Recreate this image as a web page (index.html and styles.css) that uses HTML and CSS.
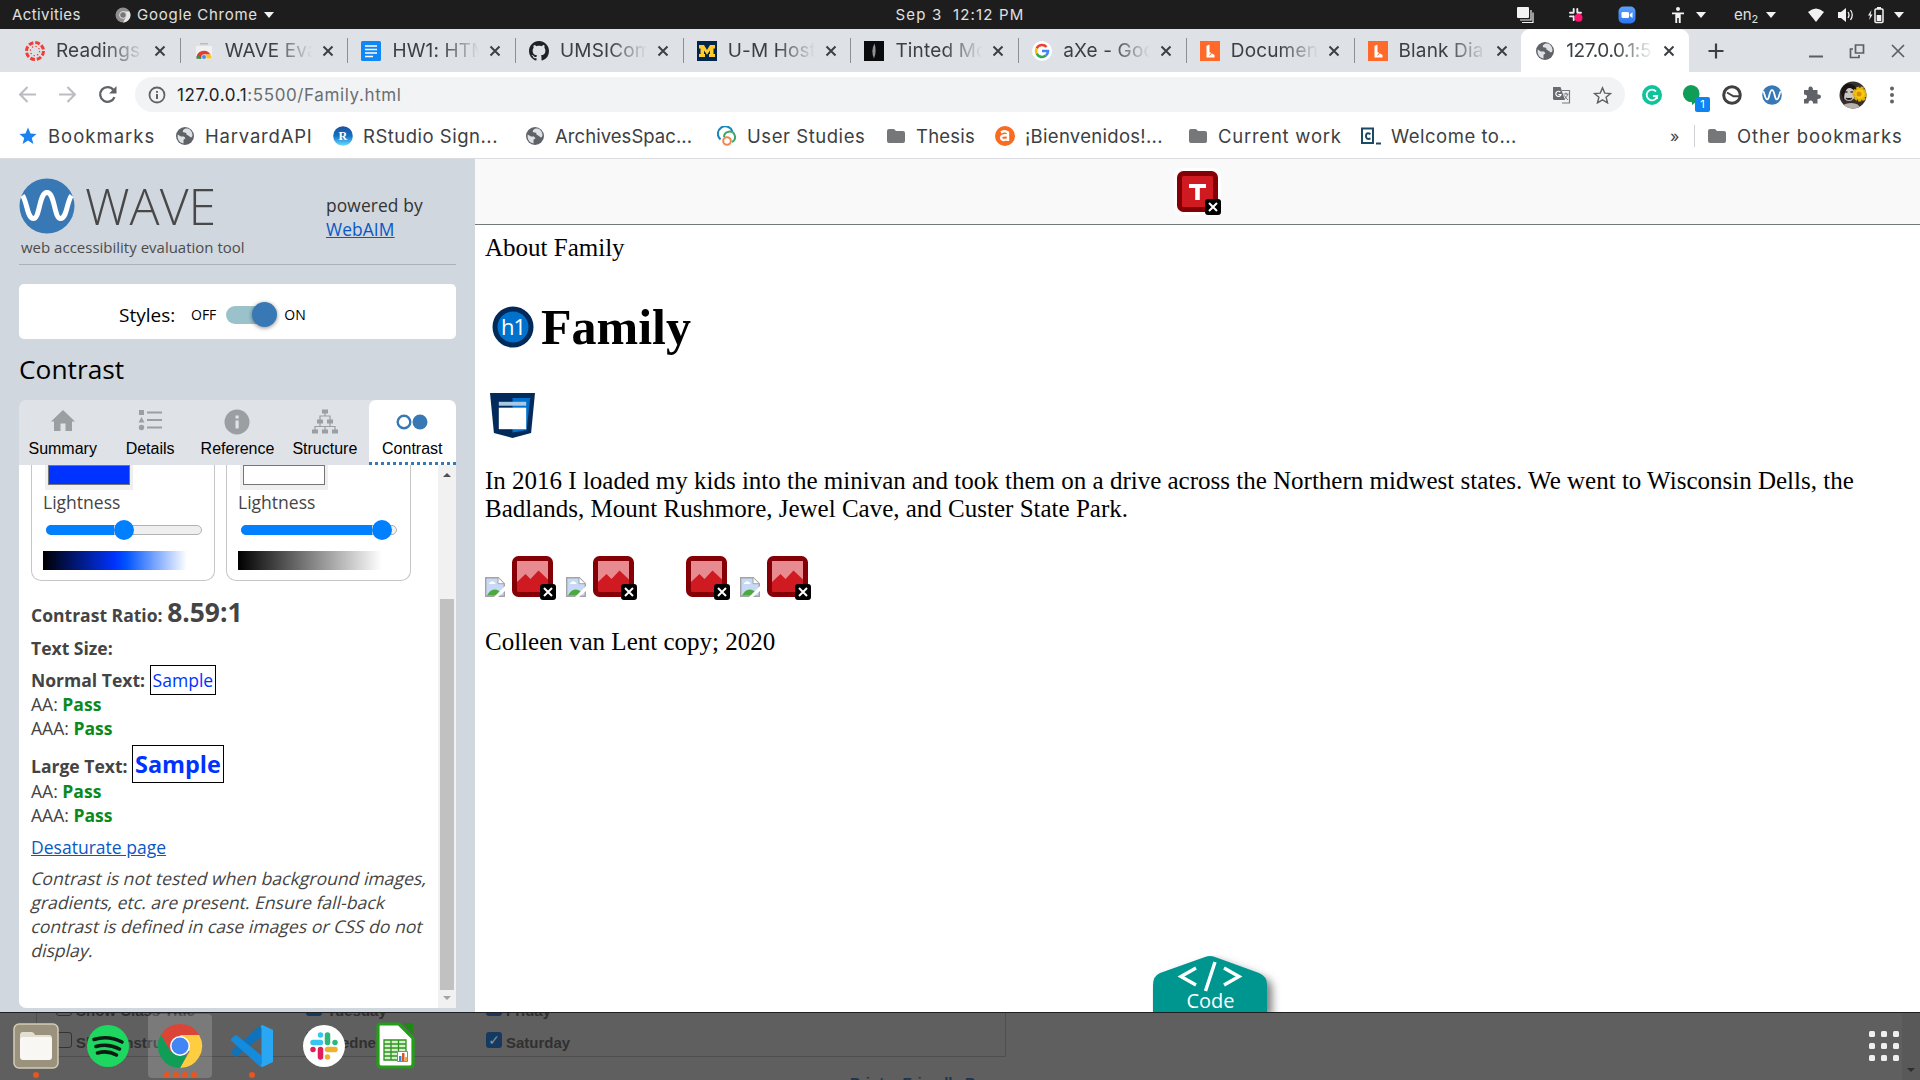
FILE: index.html
```html
<!DOCTYPE html>
<html lang="en">
<head>
<meta charset="utf-8">
<title>127.0.0.1:5500/Family.html</title>
<link rel="stylesheet" href="styles.css">
</head>
<body>
<svg class="defs" width="0" height="0">
  <defs>
    <clipPath id="round"><circle cx="14" cy="14" r="13.5"/></clipPath>
    <linearGradient id="rs" x1="0" y1="0" x2="0" y2="1"><stop offset="0" stop-color="#1d4fa0"/><stop offset=".5" stop-color="#1272c4"/><stop offset="1" stop-color="#6fe0ff"/></linearGradient>
    <linearGradient id="zm" x1="0" y1="0" x2="0" y2="1"><stop offset="0" stop-color="#5aa2ff"/><stop offset="1" stop-color="#2d74f0"/></linearGradient>
    <symbol id="globe" viewBox="0 0 20 20"><circle cx="10" cy="10" r="9" fill="#5f6368"/><path d="M2.700 8.500 6 10.500h3l1.500 1.800-2 1.500v3.700C4.500 16.800 2 13.500 2.700 8.500zM10.500 2.500c-2 1-3.500 2.500-2.500 3.500s3.500 0 3.500 2 2.500 1.300 3.500 3c1.300 1 2.500-.5 2.500-1.500 0-3.500-2-6-4.500-7z" fill="#dee1e6"/></symbol>
    <symbol id="folder" viewBox="0 0 20 20"><path d="M1 5q0-2 2-2h5l2 2h7q2 0 2 2v8q0 2-2 2H3q-2 0-2-2z" fill="#757779"/></symbol>
    <symbol id="close" viewBox="0 0 12 12"><path d="M1.500 1.500l9 9m0-9l-9 9" stroke="#3c4043" stroke-width="2" fill="none"/></symbol>
    <symbol id="lucid" viewBox="0 0 20 20"><path d="M0 0h20v20H0z" fill="#ff6a2b"/><path d="M6.500 5 9.500 3.500v7.500L14.500 14v2.500h-8z" fill="#fff"/><path d="M9.500 14.500l2-2.500" stroke="#ff6a2b" stroke-width="1"/></symbol>
    <symbol id="tri" viewBox="0 0 10 6"><path d="M0 0h10L5 6z" fill="#f2f2f2"/></symbol>
    <symbol id="wave" viewBox="0 0 56 56"><circle cx="28" cy="28" r="27.500" fill="#3879b5"/><path d="M3.500 17.500C8 23 8 40.500 14.500 40.500S20 14.500 28 14.500s7 26 13.500 26S48 23 52.500 17.500" fill="none" stroke="#fff" stroke-width="5"/></symbol>
    <symbol id="missing" viewBox="0 0 45 45"><rect x="2.500" y="2.500" width="36" height="36" rx="4" fill="#cf1a22" stroke="#840006" stroke-width="5"/><path d="M5 5h31v18.500L26.500 14.500 18.500 23l-5-5L5 26z" fill="#e78b90"/><rect x="28" y="28" width="16" height="16" rx="3" fill="#000"/><path d="M32 32l8 8m0-8l-8 8" stroke="#fff" stroke-width="2"/></symbol>
    <symbol id="broken" viewBox="0 0 20 20"><path d="M.7.700h12.600l6 6v12.600H.7z" fill="#c7d9f4" stroke="#a3a3a3" stroke-width="1.400"/><path d="M13 .7v6h6" fill="#fff" stroke="#a3a3a3"/><path d="M4 7q0-2 2-2 1-2 2.500 0Q10.500 5 10.500 7z" fill="#fff"/><path d="M2 18.500q3-6 7.500-6 4 0 5.500 2.500v3.500z" fill="#4ba93f"/><path d="M20 9 9 20h4l7-6z" fill="#fff"/></symbol>
  </defs>
</svg>

<div class="desktop">
<header class="topbar">
  <span class="tb activities">Activities</span>
  <svg class="tb-chrome" width="16" height="16" viewBox="0 0 16 16"><circle cx="8" cy="8" r="7.500" fill="#8f8f8f"/><path d="M8 4.500h6.600A7.500 7.500 0 0 1 8 15.500l3-5.500z" fill="#e6e6e6"/><circle cx="8" cy="8" r="3.400" fill="#777" stroke="#e2e2e2"/></svg>
  <span class="tb appname">Google Chrome</span>
  <svg class="tri" width="10" height="6"><use href="#tri"/></svg>
  <span class="tb clock">Sep 3&nbsp; 12:12 PM</span>
  <div class="tray">
    <svg width="18" height="18" viewBox="0 0 18 18"><rect x="1" y="1" width="12" height="11" rx="1" fill="#f2f2f2"/><path d="M15 4v10H4M17 6.500v10H6" fill="none" stroke="#f2f2f2" stroke-width="1.200"/></svg>
    <svg class="t-slack" width="16" height="16" viewBox="0 0 16 16"><g stroke="#eee" stroke-width="1.900" stroke-linecap="round"><path d="M5.700 2v3M9.300 2v3.500M5.700 9.500V13M2 5.800h3.500M2 9.400h3.500M9.500 5.800H13"/></g><circle cx="10.500" cy="10.800" r="4" fill="#ff1471"/></svg>
    <svg class="t-zoom" width="18" height="18" viewBox="0 0 18 18"><rect x=".5" y=".5" width="17" height="17" rx="5" fill="url(#zm)"/><rect x="3.500" y="6" width="7.500" height="6" rx="1.300" fill="#fff"/><path d="M11.800 8.200 14.500 6.300v5.600l-2.700-1.900z" fill="#fff"/></svg>
    <svg class="t-acc" width="14" height="18" viewBox="0 0 14 18"><circle cx="7" cy="3" r="2" fill="#f2f2f2"/><path d="M1 6.500h12v1.800H9.700V17H7.800v-5H6.200v5H4.300V8.300H1z" fill="#f2f2f2"/></svg>
    <svg class="tri t-t1" width="10" height="6"><use href="#tri"/></svg>
    <span class="tb t-en">en<sub>2</sub></span>
    <svg class="tri t-t2" width="10" height="6"><use href="#tri"/></svg>
    <svg class="t-wifi" width="16" height="14" viewBox="0 0 16 14"><path d="M0 4Q8-3 16 4L8 14z" fill="#f2f2f2"/></svg>
    <svg class="t-vol" width="16" height="16" viewBox="0 0 16 16"><path d="M0 5h3l5-4v14l-5-4H0z" fill="#f2f2f2"/><path d="M10 5q2 3 0 6M12.500 3q3.500 5 0 10" fill="none" stroke="#f2f2f2" stroke-width="1.300"/></svg>
    <svg class="t-bat" width="16" height="18" viewBox="0 0 16 18"><path d="M3.500 4 0 9.500h2L1.200 14 4.500 8.500h-2z" fill="#f2f2f2"/><rect x="7" y="3" width="8" height="13.500" rx="1" fill="none" stroke="#f2f2f2" stroke-width="1.500"/><path d="M9 1h4v2H9zM8.700 9h4.600v6H8.700z" fill="#f2f2f2"/></svg>
    <svg class="tri t-t3" width="10" height="6"><use href="#tri"/></svg>
  </div>
</header>

<nav class="tabs">
  <div class="tab"><svg class="fav" viewBox="0 0 20 20"><circle cx="10" cy="10" r="8.500" fill="none" stroke="#ef3e36" stroke-width="3" stroke-dasharray="4.800 1.870"/><circle cx="10" cy="10" r="4.600" fill="none" stroke="#ef3e36" stroke-width="1.300" stroke-dasharray="1.300 2.300"/></svg><span class="tt">Readings</span><svg class="x"><use href="#close"/></svg></div>
  <div class="tab"><svg class="fav" viewBox="0 0 20 20"><path d="M6 2h8v1.500H6z" fill="#bbb"/><path d="M2 5h16v13H2z" fill="#f1f1f1"/><path d="M2.500 17.500a7.500 7.500 0 0 1 14-4H10l-3 4z" fill="#e33b2e"/><path d="M10 13.500h6.500q1 2 1 4H11z" fill="#fbc116"/><path d="M2.500 17.500q0-2 1-4L8 18z" fill="#1ba04b"/><circle cx="10" cy="16" r="2.400" fill="#4688f1" stroke="#fff" stroke-width=".6"/></svg><span class="tt">WAVE Eva</span><svg class="x"><use href="#close"/></svg></div>
  <div class="tab"><svg class="fav" viewBox="0 0 20 20"><rect width="20" height="20" rx="1.500" fill="#1187f5"/><path d="M4 5h12M4 8.500h12M4 12h12M4 15.500h8" stroke="#fff" stroke-width="1.700"/></svg><span class="tt">HW1: HTM</span><svg class="x"><use href="#close"/></svg></div>
  <div class="tab"><svg class="fav" viewBox="0 0 16 16"><path fill="#1f2328" d="M8 0C3.580 0 0 3.580 0 8c0 3.540 2.290 6.530 5.470 7.590.4.070.55-.17.55-.38 0-.19-.01-.82-.01-1.490-2.010.37-2.530-.49-2.690-.94-.09-.23-.48-.94-.82-1.130-.28-.15-.68-.52-.01-.53.63-.01 1.080.58 1.230.82.72 1.210 1.870.87 2.330.66.070-.52.28-.87.51-1.070-1.780-.2-3.640-.89-3.640-3.950 0-.87.31-1.590.82-2.150-.08-.2-.36-1.020.08-2.120 0 0 .67-.21 2.200.82.64-.18 1.320-.27 2-.27s1.360.09 2 .27c1.530-1.040 2.200-.82 2.200-.82.44 1.100.16 1.920.08 2.120.51.56.82 1.270.82 2.150 0 3.070-1.870 3.750-3.650 3.950.29.25.54.73.54 1.480 0 1.070-.01 1.930-.01 2.200 0 .21.15.46.55.38A8.010 8.010 0 0 0 16 8c0-4.420-3.580-8-8-8z"/></svg><span class="tt">UMSICom</span><svg class="x"><use href="#close"/></svg></div>
  <div class="tab"><svg class="fav" viewBox="0 0 20 20"><path d="M0 0h20v20H0z" fill="#02264b"/><path d="M2 4h5l3 5 3-5h5v3.500h-1.500v5.500H18v3h-6v-3h1v-3.500l-3 4.200L7 9.500V13h1v3H2v-3h1.500V7.500H2z" fill="#ffcb2f"/></svg><span class="tt">U-M Host</span><svg class="x"><use href="#close"/></svg></div>
  <div class="tab"><svg class="fav" viewBox="0 0 20 20"><path d="M0 0h20v20H0z" fill="#090b0d"/><path d="M10.500 2.500Q6.500 9.500 10 17.500q3-8 .5-15z" fill="#8e9496"/></svg><span class="tt">Tinted Mo</span><svg class="x"><use href="#close"/></svg></div>
  <div class="tab"><svg class="fav" viewBox="0 0 20 20"><circle cx="10" cy="10" r="10" fill="#fff"/><g fill="none" stroke-width="2.600"><path d="M14.500 6A6 6 0 0 0 4.700 7.300" stroke="#ea4335"/><path d="M4.700 7.300a6 6 0 0 0 0 5.400" stroke="#fbbc05"/><path d="M4.700 12.700a6 6 0 0 0 9.200 1.900" stroke="#34a853"/><path d="M13.900 14.600A6 6 0 0 0 16 10h-6" stroke="#4285f4"/></g></svg><span class="tt">aXe - Goog</span><svg class="x"><use href="#close"/></svg></div>
  <div class="tab"><svg class="fav"><use href="#lucid"/></svg><span class="tt">Documen</span><svg class="x"><use href="#close"/></svg></div>
  <div class="tab nosep"><svg class="fav"><use href="#lucid"/></svg><span class="tt">Blank Dia</span><svg class="x"><use href="#close"/></svg></div>
  <div class="tab active"><svg class="fav"><use href="#globe"/></svg><span class="tt">127.0.0.1:5</span><svg class="x"><use href="#close"/></svg></div>
  <svg class="plus" viewBox="0 0 16 16"><path d="M8 .5v15M.5 8h15" stroke="#3c4043" stroke-width="2.200"/></svg>
  <div class="winctl">
    <svg viewBox="0 0 16 16"><path d="M1 13.500h14" stroke="#5c5f63" stroke-width="2"/></svg>
    <svg viewBox="0 0 16 16"><path d="M6.500 2h8v8h-8zM4 6H1.500v8.500H10V12" fill="none" stroke="#5c5f63" stroke-width="1.700"/></svg>
    <svg viewBox="0 0 16 16"><path d="M2 2l12 12M14 2 2 14" stroke="#5c5f63" stroke-width="1.700"/></svg>
  </div>
</nav>

<div class="toolbar">
  <svg class="nav" viewBox="0 0 18 18"><path d="M17 9H2M9 2 2 9l7 7" fill="none" stroke="#bbbdc0" stroke-width="2"/></svg>
  <svg class="nav" viewBox="0 0 18 18"><path d="M1 9h15M9 2l7 7-7 7" fill="none" stroke="#bbbdc0" stroke-width="2"/></svg>
  <svg class="nav" viewBox="0 0 18 18"><path d="M15.600 11.500A7 7 0 1 1 14.500 4.500" fill="none" stroke="#5f6368" stroke-width="2.200"/><path d="M17.500 1v7h-7z" fill="#5f6368"/></svg>
  <div class="omnibox">
    <svg width="18" height="18" viewBox="0 0 18 18"><circle cx="9" cy="9" r="7.500" fill="none" stroke="#5f6368" stroke-width="1.800"/><path d="M9 8v5M9 5v1.800" stroke="#5f6368" stroke-width="2"/></svg>
    <span class="url"><b>127.0.0.1</b>:5500/Family.html</span>
    <svg class="translate" width="18" height="18" viewBox="0 0 18 18"><path d="M9 4.500h7.500v12.500H9" fill="#f1f3f4" stroke="#777b80" stroke-width="1.200"/><path d="M0 1h7.500L12 14H1.500Q0 14 0 12.500z" fill="#686c71"/><path d="M7.300 6A2.600 2.600 0 1 0 8 8.500H5.500" fill="none" stroke="#fff" stroke-width="1.200"/><path d="M10.500 8h5M13 6.500V8m1.800 0q-.8 3-3.300 5M11.500 9.500q1 2.500 3.500 4.500" fill="none" stroke="#777b80"/></svg>
    <svg width="19" height="18" viewBox="0 0 20 19"><path d="M10 2l2.400 5.500 6 .5-4.600 3.900 1.500 5.900-5.300-3.200-5.300 3.200 1.500-5.900L1.600 8l6-.5z" fill="none" stroke="#5f6368" stroke-width="1.500"/></svg>
  </div>
  <div class="exts">
    <svg viewBox="0 0 20 20"><circle cx="10" cy="10" r="10" fill="#11c39a"/><path d="M14 6.500A5.300 5.300 0 1 0 15.200 11H11m4 0v3" fill="none" stroke="#fff" stroke-width="1.800"/></svg>
    <span class="hang"><svg viewBox="0 0 20 20"><path d="M9 0a8.500 8.500 0 0 1 8.500 8.700c0 5-3.500 8.300-7.500 11.300v-2.800A8.600 8.600 0 1 1 9 0z" fill="#0f9d58"/></svg><i class="badge">1</i></span>
    <svg viewBox="0 0 20 20"><circle cx="10" cy="10" r="8.300" fill="#fff" stroke="#404040" stroke-width="3"/><path d="M5 7.500l6.500 3.800H17" stroke="#404040" stroke-width="2" fill="none"/></svg>
    <svg><use href="#wave"/></svg>
    <svg viewBox="0 0 20 20"><path d="M2 5h4.500Q6 1.500 8.500 1.500T11 5h4.500v4.500Q19 9 19 11.500T15.500 14v4.500H11Q11 15.500 8.700 15.500T6.500 18.500H2V14q3 0 3-2.300T2 9.500z" fill="#5f6368"/></svg>
    <svg class="avatar" viewBox="0 0 28 28"><g clip-path="url(#round)"><path d="M0 0h28v28H0z" fill="#35302e"/><ellipse cx="10" cy="12" rx="6.500" ry="8" fill="#ccc7c3"/><path d="M2 12Q3 1 12 3q7 2 5 9Q12 5 8 8q-3 3-3 12z" fill="#171412"/><path d="M6 11h2.500m3 0H14M7 17q3 3 6 0" stroke="#38302e" stroke-width="1.500"/><path d="M3 28q0-6 9-6t9 6z" fill="#b7b0ab"/><circle cx="21" cy="13" r="6" fill="#f6ca13" stroke="#e6b400" stroke-width="3" stroke-dasharray="3 1"/><circle cx="20" cy="13" r="2.500" fill="#d88d08"/></g></svg>
    <svg viewBox="0 0 20 20"><g fill="#5f6368"><circle cx="10" cy="3.500" r="2"/><circle cx="10" cy="10" r="2"/><circle cx="10" cy="16.500" r="2"/></g></svg>
  </div>
</div>

<div class="bookmarks">
  <a class="b1"><svg viewBox="0 0 20 20"><path d="M10 1.500l2.500 6 6 .4-4.700 4 1.600 6.100-5.400-3.400L4.600 18l1.600-6.100-4.700-4 6-.4z" fill="#1a82f0"/></svg>Bookmarks</a>
  <a class="b2"><svg><use href="#globe"/></svg>HarvardAPI</a>
  <a class="b3"><svg viewBox="0 0 20 20"><circle cx="10" cy="10" r="9.800" fill="url(#rs)"/><text x="10" y="14" font-family="Liberation Serif" font-weight="700" font-size="12" fill="#fff" text-anchor="middle">R</text></svg>RStudio Sign...</a>
  <a class="b4"><svg><use href="#globe"/></svg>ArchivesSpac...</a>
  <a class="b5"><svg viewBox="0 0 20 20"><g fill="none" stroke-width="2"><path d="M3.500 13.500a7.500 7.500 0 1 1 12-8" stroke="#1787bd"/><path d="M7 11a5.500 5.500 0 1 1 8 5" stroke="#3ca66b"/><circle cx="10" cy="15" r="3.800" stroke="#f5854c"/></g></svg>User Studies</a>
  <a class="b6"><svg><use href="#folder"/></svg>Thesis</a>
  <a class="b7"><svg viewBox="0 0 20 20"><circle cx="10" cy="10" r="10" fill="#f96b1f"/><path d="M6 6.500q4-2.500 7 0V15M13 9.500q-7-1-7 2.500 1 3.500 7 1" fill="none" stroke="#fff" stroke-width="2.400"/></svg>¡Bienvenidos!...</a>
  <a class="b8"><svg><use href="#folder"/></svg>Current work</a>
  <a class="b9"><svg viewBox="0 0 20 20"><path d="M1 2.500h11v14.500H1z" fill="none" stroke="#1d4a63" stroke-width="2"/><path d="M9.500 8Q5 6 5 10t4.500 2.500" fill="none" stroke="#1d4a63" stroke-width="2"/><path d="M15 17.500h5" stroke="#1d4a63" stroke-width="2"/></svg>Welcome to...</a>
  <span class="more">»</span>
  <a class="b10"><svg><use href="#folder"/></svg>Other bookmarks</a>
</div>

<div class="view">
<aside class="side">
  <div class="brand">
    <svg class="logo" width="56" height="56"><use href="#wave"/></svg>
    <span class="wordmark">WAVE</span>
    <div class="powered">powered by<br><a>WebAIM</a></div>
    <span class="tagline">web accessibility evaluation tool</span>
  </div>
  <div class="styles"><span class="st">Styles:</span><span class="off">OFF</span><span class="switch"><i></i></span><span class="on">ON</span></div>
  <h2>Contrast</h2>
  <div class="ptabs">
    <div><svg viewBox="0 0 26 26"><path d="M13 1 25 12.500h-3V22h-6.500v-7.500h-5V22H4v-9.500H1z" fill="#9c9fa1"/></svg>Summary</div>
    <div><svg viewBox="0 0 26 26"><path d="M2 1h5v5H2zM4.500 8l3 5.500h-6zM10 2.500h15v2H10zM10 10h15v2H10zM10 17.500h15v2H10z" fill="#9c9fa1"/><circle cx="4.500" cy="18.500" r="2.700" fill="#9c9fa1"/></svg>Details</div>
    <div><svg viewBox="0 0 26 26"><circle cx="13" cy="13" r="12.500" fill="#9c9fa1"/><path d="M11.500 6.500h3.200v3h-3.200zM11.500 11.500h3.200v8h-3.200z" fill="#dfe2e7"/></svg>Reference</div>
    <div><svg viewBox="0 0 26 26"><g fill="#9c9fa1"><path d="M10 .5h6v4h-6zM5 10.500h6v4H5zM15 10.500h6v4h-6zM0 20.500h6v4H0zM10 20.500h6v4h-6zM20 20.500h6v4h-6z"/></g><path d="M13 4v3M8 11V7h10v4M3 21v-3.500h20V21M13 21v-3.500M8 14v3.500M18 14v3.500" fill="none" stroke="#9c9fa1" stroke-width="1.200"/></svg>Structure</div>
    <div class="sel"><svg class="wide" viewBox="0 0 32 26"><circle cx="8" cy="13" r="6.300" fill="none" stroke="#3879b5" stroke-width="2.400"/><circle cx="24" cy="13" r="7.500" fill="#3879b5"/></svg>Contrast</div>
  </div>
  <div class="pane">
    <div class="scroll">
      <div class="cards">
        <div class="card"><div class="sw"><i class="blue"></i></div><label>Lightness</label><div class="range"><i class="half"></i></div><div class="grad g1"></div></div>
        <div class="card"><div class="sw"><i></i></div><label>Lightness</label><div class="range"><i class="full"></i></div><div class="grad g2"></div></div>
      </div>
      <p class="r1"><b>Contrast Ratio: <span class="ratio">8.59:1</span></b></p>
      <p class="r2"><b>Text Size:</b></p>
      <p class="r3"><b>Normal Text:</b> <span class="sample">Sample</span></p>
      <p>AA: <b class="ok">Pass</b></p>
      <p>AAA: <b class="ok">Pass</b></p>
      <p class="r4"><b>Large Text:</b> <b class="sample big">Sample</b></p>
      <p class="r5">AA: <b class="ok">Pass</b></p>
      <p>AAA: <b class="ok">Pass</b></p>
      <p class="r6"><a>Desaturate page</a></p>
      <p class="note"><span>Contrast is not tested when background images,</span><span>gradients, etc. are present. Ensure fall-back</span><span>contrast is defined in case images or CSS do not</span><span>display.</span></p>
    </div>
    <div class="sbar"><svg width="8" height="4" viewBox="0 0 8 4"><path d="M0 4h8L4 0z" fill="#505050"/></svg><i></i><svg width="8" height="4" viewBox="0 0 8 4"><path d="M0 0h8L4 4z" fill="#a3a3a3"/></svg></div>
  </div>
</aside>

<main class="page">
  <div class="head"><svg width="49" height="49" viewBox="-4 -4 49 49"><rect x="-3" y="-3" width="47" height="47" rx="8" fill="#fff"/><rect x="2.500" y="2.500" width="36" height="36" rx="4" fill="#cf1a22" stroke="#840006" stroke-width="5"/><path d="M12 13h17v4h-6.200v12h-4.600V17H12z" fill="#fff"/><rect x="28" y="28" width="16" height="16" rx="3" fill="#000"/><path d="M32 32l8 8m0-8l-8 8" stroke="#fff" stroke-width="2"/></svg></div>
  <div class="about">About Family</div>
  <h1><svg width="42" height="42" viewBox="0 0 42 42"><circle cx="21" cy="21" r="18" fill="#0072ce" stroke="#012a59" stroke-width="5"/><text x="21" y="29" font-family="Open Sans" font-size="22" font-weight="400" letter-spacing="-1" fill="#fff" text-anchor="middle">h1</text></svg>Family</h1>
  <svg class="region" width="45" height="45" viewBox="0 0 46 46"><path d="M0 0h46l-4 41-19 5-19-5z" fill="#022a5a"/><path d="M23 5h18l-3.500 33L23 40.500z" fill="#0072ce"/><path d="M9 9h28v4H9z" fill="#aac9e6"/><path d="M9 15h28v22H9z" fill="#fff"/></svg>
  <p class="story">In 2016 I loaded my kids into the minivan and took them on a drive across the Northern midwest states. We went to Wisconsin Dells, the<br>Badlands, Mount Rushmore, Jewel Cave, and Custer State Park.</p>
  <div class="imgs">
    <svg class="bk"><use href="#broken"/></svg><svg class="ms"><use href="#missing"/></svg>
    <svg class="bk"><use href="#broken"/></svg><svg class="ms"><use href="#missing"/></svg>
    <svg class="ms gap"><use href="#missing"/></svg>
    <svg class="bk"><use href="#broken"/></svg><svg class="ms"><use href="#missing"/></svg>
  </div>
  <div class="foot">Colleen van Lent copy; 2020</div>
  <div class="code"><svg width="130" height="57" viewBox="0 0 130 57"><path class="shade" d="M1 57V30Q1 21 8 18L53 2q5-2 10 0l44 16q8 3 8 12v27z" fill="#009690"/><path d="M44 13 29 21.500 44 30M72 13l15 8.500L72 30M63 7 53.500 36" fill="none" stroke="#fff" stroke-width="3.400"/><text x="58.500" y="53" font-family="Open Sans" font-size="20" fill="#fff" text-anchor="middle">Code</text></svg></div>
</main>
</div>

<footer class="dock">
  <div class="ghost">
    <span class="gbox"></span>
    <i class="chk e c1"></i><span class="g1t">Show Class Title</span>
    <i class="chk e c2"></i><span class="g2t">Show Instructor</span>
    <i class="chk c3"></i><span class="g3t">Tuesday</span>
    <i class="chk c4"></i><span class="g4t">Wednesday</span>
    <i class="chk c5"></i><span class="g5t">Friday</span>
    <i class="chk c6">✓</i><span class="g6t">Saturday</span>
    <span class="g7t">Printer Friendly Page</span>
    <i class="gbar"></i>
  </div>
  <div class="app"><svg viewBox="0 0 48 48"><rect x="2" y="2" width="44" height="44" rx="5" fill="#9b927d" stroke="#d4cbb7" stroke-width="1.500"/><path d="M8 13q0-3 3-3h8q3 0 4 3h14q3 0 3 3v5H8z" fill="#e2dfd3"/><rect x="8" y="15" width="32" height="23" rx="3" fill="#f8f7f4"/></svg><span class="dots"><i></i></span></div>
  <div class="app"><svg viewBox="0 0 48 48"><circle cx="24" cy="24" r="21" fill="#1ed760"/><path d="M10 17.500q14-4.500 28 2.500M12 24.500q12-3.500 23.500 2.500M13.500 31q10-3 19 2" fill="none" stroke="#0c1c12" stroke-width="3.600" stroke-linecap="round"/></svg></div>
  <div class="app cur"><svg viewBox="0 0 48 48"><path d="M4.900 13A22 22 0 0 1 43.100 13L24 14l-9.500 15.500z" fill="#db4437"/><path d="M43.100 13A22 22 0 0 1 24 46l9.500-16.500L24 13z" fill="#ffcd40"/><path d="M24 46A22 22 0 0 1 4.900 13l9.600 16.500 16 4z" fill="#0f9d58"/><circle cx="24" cy="24" r="10" fill="#fff"/><circle cx="24" cy="24" r="8.500" fill="#4285f4"/></svg><span class="dots"><i></i><i></i><i></i><i></i></span></div>
  <div class="app"><svg viewBox="0 0 48 48"><path d="M32.500 3 3 29.500v1.500l4 3.500h2L33.500 14.500z" fill="#0f72ba"/><path d="M32.500 45 3 18.500V17l4-3.500h2L33.500 33.500z" fill="#148bdc"/><path d="M34.500 3 45 8v32l-10.500 5-2-1 1-3V7l-1-3z" fill="#2aa7f2"/></svg><span class="dots"><i></i></span></div>
  <div class="app"><svg viewBox="0 0 48 48"><circle cx="24" cy="24" r="21" fill="#fff"/><g stroke-width="5.500" stroke-linecap="round" fill="none"><path d="M20.500 13v0M13 20.500h7.500" stroke="#36c5f0"/><path d="M27.500 13v7.500M35 20.500v0" stroke="#2eb67d"/><path d="M27.500 27.500H35M27.500 35v0" stroke="#ecb22e"/><path d="M20.500 27.500V35M13 27.500v0" stroke="#e01e5a"/></g></svg></div>
  <div class="app"><svg viewBox="0 0 48 48"><path d="M8 2h19l14 14v26q0 3-3 3H9q-3 0-3-3V5q0-3 2-3z" fill="#fff" stroke="#21a017" stroke-width="3.200"/><path d="M31 1h10v11z" fill="#1c8a12"/><path d="M12 18h22v20H12z" fill="#d4f1cb"/><path d="M12 18h22v20H12zM12 22h22M12 26h22M12 30h22M12 34h22M19 18v20M26.500 18v20" fill="none" stroke="#2f9221" stroke-width="1.300"/><path d="M25.500 29.500h10v10h-10z" fill="#fff" stroke="#888"/><path d="M27 34h2.500v5H27z" fill="#2f8fdc"/><path d="M30 31h2.500v8H30z" fill="#e0561e"/><path d="M33 35h2v4h-2z" fill="#e6b23c"/></svg></div>
  <svg class="apps" width="30" height="30" viewBox="0 0 30 30"><g fill="#f0efee"><rect width="6" height="6" rx="1.500"/><rect x="12" width="6" height="6" rx="1.500"/><rect x="24" width="6" height="6" rx="1.500"/><rect y="12" width="6" height="6" rx="1.500"/><rect x="12" y="12" width="6" height="6" rx="1.500"/><rect x="24" y="12" width="6" height="6" rx="1.500"/><rect y="24" width="6" height="6" rx="1.500"/><rect x="12" y="24" width="6" height="6" rx="1.500"/><rect x="24" y="24" width="6" height="6" rx="1.500"/></g></svg>
</footer>
</div>
</body>
</html>
```
FILE: styles.css
```css
* { box-sizing: border-box; }
body { margin: 0; background: #fff; overflow: hidden; }
svg { display: block; flex: none; }
p, h1, h2 { margin: 0; }
.defs { position: absolute; }
.desktop { width: 1920px; height: 1080px; display: flex; flex-direction: column; font-family: Inter, "Open Sans", sans-serif; }

/* system bar */
.topbar { height: 29px; flex: none; background: #1d1d1d; display: flex; align-items: center; padding-left: 12px; position: relative; }
.tb { color: #e0e0e0; font-size: 15px; line-height: 29px; white-space: pre; }
.activities { width: 103px; letter-spacing: .4px; }
.tb-chrome { margin-right: 6px; }
.appname { width: 127px; letter-spacing: .75px; }
.clock { position: absolute; left: 0; right: 0; text-align: center; letter-spacing: 1.150px; }
.tray { margin-left: auto; display: flex; align-items: center; padding-right: 16px; }
.t-slack { margin-left: 34px; }
.t-zoom { margin-left: 34px; }
.t-acc { margin-left: 35px; }
.t-t1 { margin-left: 11px; }
.t-en { margin-left: 28px; width: 27px; }
.t-en sub { font-size: 11px; line-height: 1; vertical-align: -3px; }
.t-t2 { margin-left: 5px; }
.t-wifi { margin-left: 32px; }
.t-vol { margin-left: 14px; }
.t-bat { margin-left: 14px; }
.t-t3 { margin-left: 10px; }

/* tab strip */
.tabs { height: 43px; flex: none; background: #dee1e6; display: flex; align-items: center; padding-left: 12px; }
.tab { width: 167.700px; height: 43px; display: flex; align-items: center; padding-left: 14px; position: relative; }
.tab:first-child .fav { margin-left: -1px; }
.tab:first-child .x { margin-left: 9px; }
.tab:not(.active):not(.nosep)::after { content: ""; width: 1px; height: 25px; background: #8b8e92; position: absolute; right: -1px; top: 9px; }
.tab.active { background: #fff; border-radius: 9px 9px 0 0; }
.fav { width: 20px; height: 20px; margin-right: 11px; }
.tt { width: 89px; overflow: hidden; white-space: nowrap; font-size: 19px; line-height: 28px; color: #3c4043; letter-spacing: .15px; -webkit-mask-image: linear-gradient(90deg, #000 55%, transparent 98%); mask-image: linear-gradient(90deg, #000 55%, transparent 98%); }
.active .tt { letter-spacing: -.4px; }
.x { width: 12px; height: 12px; margin-left: 8px; }
.plus { width: 16px; height: 16px; margin-left: 19px; }
.winctl { margin-left: auto; display: flex; gap: 25px; padding-right: 14px; }
.winctl svg { width: 16px; height: 16px; }

/* toolbar */
.toolbar { height: 45px; flex: none; display: flex; align-items: center; padding-left: 18px; }
.nav { width: 19px; height: 19px; margin-right: 21px; }
.nav + .nav + .nav { margin-right: 18px; }
.omnibox { width: 1490px; flex: none; height: 35px; border-radius: 18px; background: #f1f3f4; display: flex; align-items: center; padding: 0 13px; }
.url { margin-left: 11px; font-size: 17px; color: #6a6e73; letter-spacing: .62px; }
.url b { font-weight: 400; color: #202124; }
.translate { margin-left: auto; margin-right: 22px; }
.exts { display: flex; flex: none; align-items: center; margin-left: 17px; }
.exts > svg, .hang svg { width: 20px; height: 20px; }
.exts > svg, .hang { margin-right: 20px; }
.hang { position: relative; }
.badge { position: absolute; left: 13px; top: 12px; width: 15px; height: 15px; border-radius: 2px; background: #0d84f2; color: #fff; font: 11px/15px Inter, sans-serif; text-align: center; }
.exts > .avatar { width: 28px; height: 28px; margin: 0 15px 0 -3px; }

.bookmarks { height: 42px; flex: none; border-bottom: 1px solid #dadce0; display: flex; align-items: center; padding: 0 0 4px 18px; font-size: 18.500px; color: #3c4043; }
.bookmarks a { display: flex; flex: none; align-items: center; white-space: nowrap; }
.bookmarks svg { width: 20px; height: 20px; margin-right: 10px; }
.bookmarks .b1 { width: 157px; letter-spacing: 1px; }
.bookmarks .b2 { width: 158px; letter-spacing: .8px; }
.bookmarks .b3 { width: 192px; letter-spacing: .5px; }
.bookmarks .b4 { width: 192px; letter-spacing: .05px; }
.bookmarks .b5 { width: 169px; letter-spacing: .55px; }
.bookmarks .b6 { width: 109px; letter-spacing: .2px; }
.bookmarks .b7 { width: 193px; letter-spacing: .3px; }
.bookmarks .b8 { width: 173px; letter-spacing: .75px; }
.bookmarks .b9 { width: 309px; letter-spacing: .5px; }
.more { width: 24px; font-size: 16px; line-height: 20px; }
.bookmarks .b10 { border-left: 1px solid #cfd1d4; padding-left: 12px; letter-spacing: .95px; }

/* WAVE panel */
.view { height: 853px; flex: none; display: flex; }
.side { width: 475px; background: #d0d7de; padding: 19px 19px 4px; font-family: "Open Sans", sans-serif; display: flex; flex-direction: column; }
.brand { height: 87px; width: 437px; border-bottom: 1px solid #acb1b6; display: grid; grid-template-columns: 66px 241px 1fr; grid-template-rows: 56px 30px; }
.wordmark { font-size: 50px; font-weight: 300; line-height: 57px; color: #484848; }
.powered { font-size: 17.400px; line-height: 24px; padding-top: 15px; color: #333; white-space: nowrap; letter-spacing: .1px; }
a { color: #0a58c4; text-decoration: underline; }
.bookmarks a { color: inherit; text-decoration: none; }
.tagline { grid-column: 1 / 3; grid-row: 2; font-size: 15px; line-height: 26px; padding-left: 2px; color: #4c4c4c; }
.styles { margin-top: 19px; height: 55px; width: 437px; background: #fff; border-radius: 5px; display: flex; align-items: center; padding: 7px 0 0 100px; font-size: 19px; line-height: 24px; }
.off, .on { font-size: 14px; }
.off { margin-left: 16px; }
.st { width: 56px; }
.switch { width: 48px; height: 18px; border-radius: 9px; background: #9bc2ca; margin: 0 9px 0 10px; position: relative; }
.switch i { position: absolute; left: 26px; top: -4px; width: 25px; height: 25px; border-radius: 50%; background: #3879b5; box-shadow: 0 1px 4px rgba(0,0,0,.45); }
.styles .on { margin-left: 1px; }
h2 { height: 61px; padding-top: 12px; font-size: 26.300px; font-weight: 400; line-height: 36px; }
.ptabs { height: 65px; width: 437px; background: #dfe2e7; border-radius: 7px 7px 0 0; display: grid; grid-template-columns: repeat(5, 1fr); font: 16px/20px "Liberation Sans", sans-serif; }
.ptabs div { display: flex; flex-direction: column; align-items: center; padding-top: 9px; gap: 4px; }
.ptabs svg { width: 26px; height: 26px; }
.ptabs .wide { width: 32px; }
.sel { background: #fff; border-radius: 7px 7px 0 0; border-bottom: 3px dotted #3879b5; }
.pane { width: 437px; height: 543px; background: #fff; border-radius: 0 0 0 7px; display: flex; overflow: hidden; }
.scroll { width: 419px; padding-left: 12px; font-size: 17.550px; line-height: 24px; color: #444; }
.cards { display: flex; gap: 11px; }
.card { width: 184px; height: 116px; border: 1px solid #c6c6c6; border-top: 0; border-radius: 0 0 10px 10px; padding-left: 11px; }
.card + .card { width: 185px; }
.sw { width: 88px; height: 25px; margin-left: 2px; background: #efefef; padding: 0 3px 5px; }
.sw i { display: block; height: 20px; background: #fff; border: 1px solid #767676; }
.sw .blue { background: #0033ff; }
.card label { display: block; height: 24px; }
.range { width: 156px; height: 10px; margin: 11px 0 16px 3px; border: 1px solid #b2b2b2; border-radius: 5px; background: #efefef; position: relative; }
.range i { display: block; height: 10px; margin: -1px; background: #0080ff; border-radius: 5px 0 0 5px; }
.range .half { width: 68px; } .range .full { width: 131px; }
.range i::after { content: ""; position: absolute; left: 67px; top: -6px; width: 20px; height: 20px; border-radius: 50%; background: #0080ff; }
.range .full::after { left: 130px; }
.grad { width: 144px; height: 19px; }
.g1 { background: linear-gradient(90deg, #000, #0033ff 50%, #0055ff 58%, #fff); }
.g2 { background: linear-gradient(90deg, #000, #808080 50%, #fff); }
.r1 { margin-top: 22px; }
.ratio { font-size: 26.400px; line-height: 1px; }
.r2 { margin-top: 9px; } .r3 { margin-top: 8px; } .r4 { margin-top: 14px; } .r5 { margin-top: 1px; } .r6 { margin-top: 8px; }
.sample { color: #0033ff; border: 1px solid #000; padding: 2px; line-height: 1px; }
.big { font-size: 23.400px; }
.ok { color: #0a8a1c; }
.note { margin: 7px 0 0 1px; white-space: nowrap; }
.note span { display: block; transform: skewX(-14deg); letter-spacing: .03px; }
.sbar { width: 18px; background: #f1f1f1; display: flex; flex-direction: column; align-items: center; padding-top: 8px; }
.sbar i { width: 14px; height: 391px; margin: 122px 0 6px; background: #c1c1c1; }

/* evaluated page */
.page { width: 1445px; position: relative; overflow: hidden; font-family: "Liberation Serif", serif; font-size: 25px; line-height: 28px; color: #000; }
.head { height: 66px; background: #f9f9f9; border-bottom: 1px solid #747a76; padding: 8px 0 0 698px; }
.about { padding: 9px 0 0 10px; }
h1 { display: flex; align-items: center; height: 56px; margin: 37px 0 38px 17px; font-size: 50px; line-height: 56px; }
h1 svg { margin-right: 7px; }
.region { margin: 0 0 1px 15px; }
.story { padding: 28px 0 0 10px; white-space: nowrap; }
.imgs { display: flex; align-items: flex-start; margin: 33px 0 0 10px; height: 45px; }
.bk { width: 20px; height: 20px; margin: 21px 7px 0 0; }
.ms { width: 45px; height: 45px; margin-right: 9px; }
.gap { margin-left: 39px; }
.foot { padding: 27px 0 0 10px; }
.code { position: absolute; left: 677px; bottom: 0; width: 130px; height: 57px; }
.shade { filter: drop-shadow(5px 5px 4px rgba(0,0,0,.5)); }

/* dock */
.dock { height: 68px; flex: none; position: relative; background: #5f5f5f; border-top: 1px solid #1f1f1f; display: flex; overflow: hidden; }
.app { width: 72px; height: 67px; padding-top: 9px; display: flex; flex-direction: column; align-items: center; position: relative; }
.app svg { width: 48px; height: 48px; }
.cur::before { content: ""; position: absolute; left: 4px; top: 1px; width: 64px; height: 64px; border-radius: 4px; background: rgba(255,255,255,.17); }
.app svg, .dots { position: relative; }
.dots { display: flex; gap: 3px; margin-top: 2px; }
.dots i { width: 6px; height: 6px; border-radius: 50%; background: #e95420; }
.apps { margin: 18px 21px 0 auto; position: relative; }
.ghost { position: absolute; inset: 0; font: bold 15px/18px "Liberation Sans", sans-serif; color: #303030; }
.ghost > * { position: absolute; white-space: nowrap; }
.gbox { left: 36px; top: -5px; width: 970px; height: 49px; border: 1px solid #4e4e4e; }
.chk { width: 16px; height: 16px; border-radius: 3px; background: #16395f; color: #8a9299; font: bold 14px/16px "DejaVu Sans", sans-serif; text-align: center; }
.e { background: none; border: 1px solid #333; }
.c1 { left: 56px; top: -13px; } .c2 { left: 56px; top: 19px; }
.c3 { left: 306px; top: -13px; } .c4 { left: 306px; top: 19px; }
.c5 { left: 486px; top: -13px; } .c6 { left: 486px; top: 19px; }
.g1t { left: 76px; top: -11px; } .g2t { left: 76px; top: 21px; }
.g3t { left: 327px; top: -11px; } .g4t { left: 327px; top: 21px; }
.g5t { left: 506px; top: -11px; } .g6t { left: 506px; top: 21px; }
.g7t { left: 850px; top: 61px; color: #1f3448; }
.gbar { right: 0; top: 0; bottom: 0; width: 18px; background: #595959; }
.gbar::after { content: ""; position: absolute; left: 5px; top: 55px; border: 4px solid transparent; border-top-color: #2e2e2e; }
```
